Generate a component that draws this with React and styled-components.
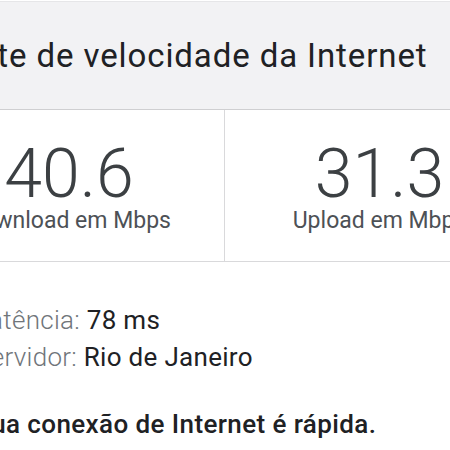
import React from "react";
import styled, { createGlobalStyle } from "styled-components";

const Global = createGlobalStyle`
  html, body { margin: 0; padding: 0; background: #ffffff; overflow: hidden; }
  body { font-family: Roboto, "Noto Sans", Arial, sans-serif; -webkit-font-smoothing: antialiased; }
`;

const Viewport = styled.div`
  width: 450px;
  height: 450px;
  overflow: hidden;
  padding-top: 1px;
  box-sizing: border-box;
`;

const Card = styled.div`
  width: 620px;
  margin-left: -86px;
  border-top: 1px solid #e6e6e8;
`;

const Header = styled.div`
  height: 107px;
  display: flex;
  align-items: center;
  padding-left: 28px;
  background: #f2f2f4;
  border-bottom: 1px solid #cfcfd1;
`;

const Title = styled.h1`
  margin: 0;
  font-size: 33px;
  letter-spacing: 0.9px;
  font-weight: 400;
  color: #202124;
  white-space: nowrap;
`;

const Results = styled.div`
  display: grid;
  grid-template-columns: 1fr 1fr;
  border-bottom: 1px solid #d9d9db;
`;

const Cell = styled.div`
  display: flex;
  flex-direction: column;
  align-items: center;
  padding: 32px 0 28px;
  border-left: ${(p) => (p.$divider ? "1px solid #d9d9db" : "none")};
`;

const Speed = styled.div`
  font-size: 68px;
  line-height: 64px;
  font-weight: 300;
  color: #3c4043;
  white-space: nowrap;
`;

const Unit = styled.div`
  margin-top: 3px;
  font-size: 23px;
  line-height: 24px;
  font-weight: 400;
  color: #4d5156;
  white-space: nowrap;
`;

const Details = styled.div`
  padding: 40px 0 0 61px;
`;

const InfoLine = styled.div`
  font-size: 26px;
  letter-spacing: 0.3px;
  line-height: 37px;
  white-space: nowrap;
`;

const Label = styled.span`
  font-weight: 300;
  color: #70757a;
`;

const Value = styled.span`
  font-weight: 400;
  color: #202124;
`;

const Verdict = styled.div`
  margin-top: 30px;
  font-size: 26px;
  letter-spacing: 0.4px;
  line-height: 37px;
  font-weight: 500;
  color: #202124;
  white-space: nowrap;
`;

export default function App() {
  return (
    <>
      <Global />
      <Viewport>
        <Card>
          <Header>
            <Title>Teste de velocidade da Internet</Title>
          </Header>
          <Results>
            <Cell>
              <Speed>40.6</Speed>
              <Unit>Download em Mbps</Unit>
            </Cell>
            <Cell $divider>
              <Speed>31.3</Speed>
              <Unit>Upload em Mbps</Unit>
            </Cell>
          </Results>
          <Details>
            <InfoLine>
              <Label>Latência: </Label>
              <Value>78 ms</Value>
            </InfoLine>
            <InfoLine>
              <Label>Servidor: </Label>
              <Value>Rio de Janeiro</Value>
            </InfoLine>
            <Verdict>Sua conexão de Internet é rápida.</Verdict>
          </Details>
        </Card>
      </Viewport>
    </>
  );
}
